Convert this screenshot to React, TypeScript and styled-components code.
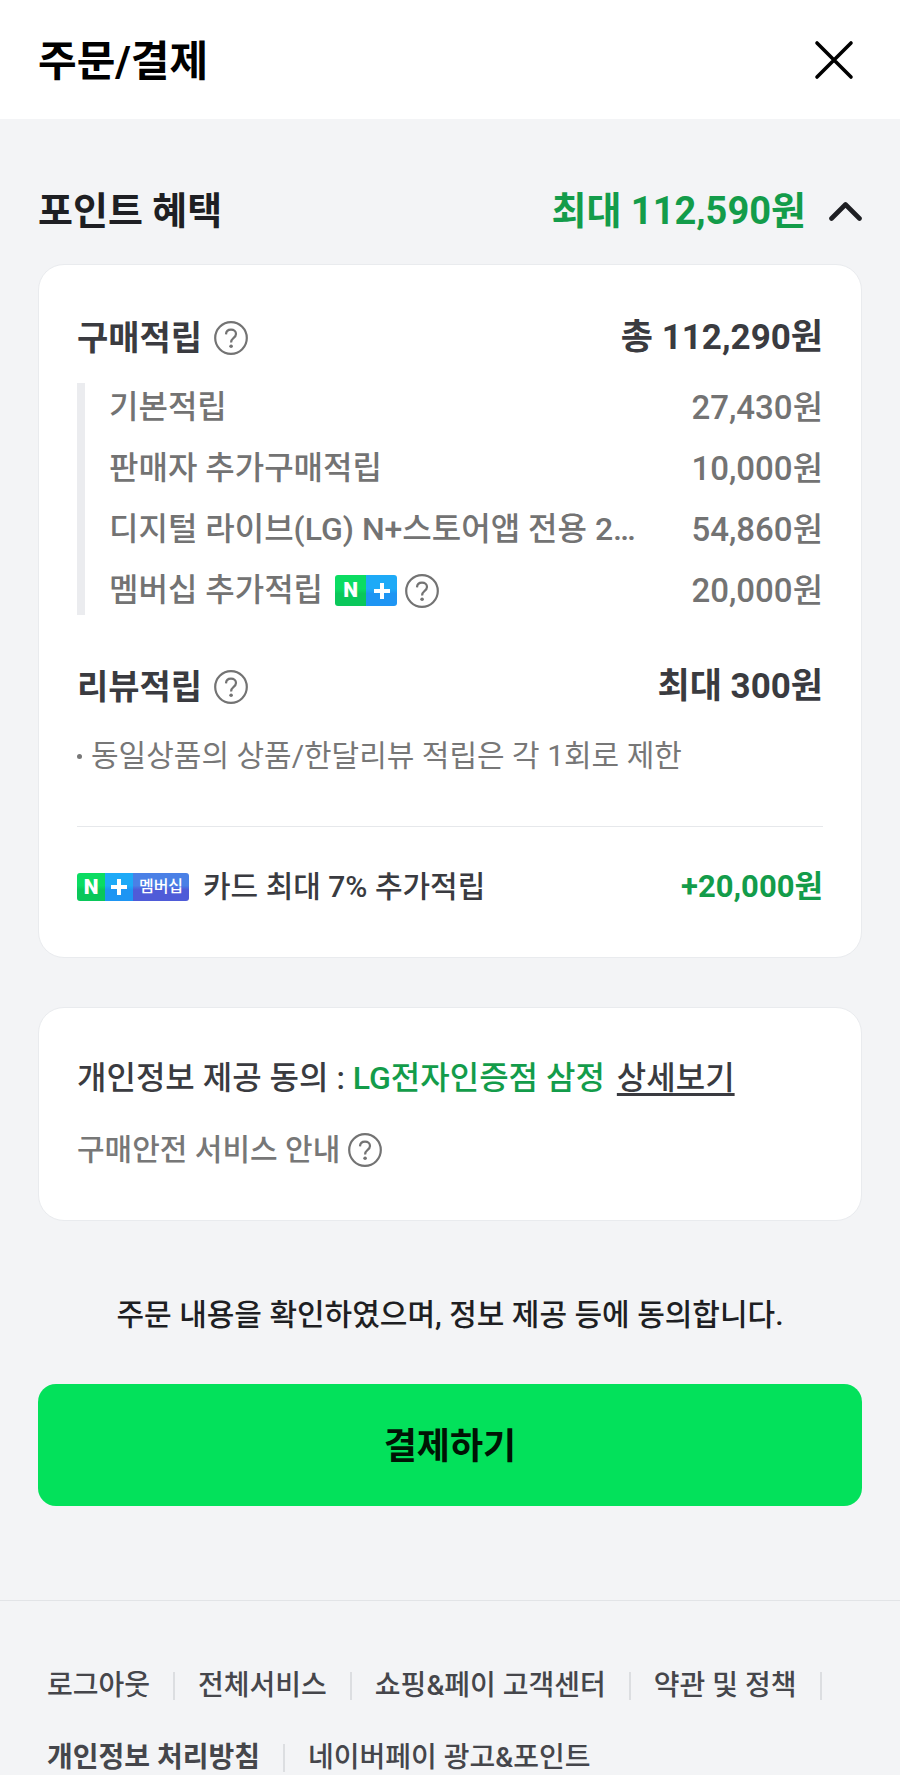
import React, { useState } from "react";
import styled, { createGlobalStyle } from "styled-components";

const GlobalStyle = createGlobalStyle`
  * { box-sizing: border-box; }
  body {
    margin: 0;
    background: #f3f4f6;
    color: #1e1f23;
    font-family: Roboto, "Noto Sans CJK KR", sans-serif;
    font-size: 30px;
    line-height: 44px;
  }
  h1, h2, h3, p, ul, dl, dd, dt { margin: 0; padding: 0; }
  button { font-family: inherit; cursor: pointer; }
`;

const TopBar = styled.header`
  display: flex;
  align-items: center;
  justify-content: space-between;
  padding: 29px 44px 28px 38px;
  background: #fff;
`;

const PageTitle = styled.h1`
  padding-top: 4px;
  font-size: 42px;
  line-height: 58px;
  font-weight: 700;
  color: #000;
`;

const IconButton = styled.button`
  display: flex;
  flex: none;
  padding: 0;
  border: 0;
  background: none;
  color: inherit;
`;

const Content = styled.main`
  padding: 67px 38px 94px;
`;

const SectionHeader = styled.div`
  display: flex;
  align-items: center;
  justify-content: space-between;
  margin-bottom: 28px;
  font-size: 38px;
  line-height: 50px;
`;

const SectionTitle = styled.h2`
  font-size: inherit;
  font-weight: 700;
`;

const SectionTotal = styled.div`
  display: flex;
  align-items: center;
  gap: 22px;
`;

const Green = styled.strong`
  font-weight: 700;
  color: #139c4a;
`;

const Card = styled.section`
  padding: 48px 38px;
  border: 1px solid #e9ebee;
  border-radius: 26px;
  background: #fff;

  & + & { margin-top: 49px; }
`;

const Row = styled.div`
  display: flex;
  align-items: center;
  justify-content: space-between;
  gap: 40px;
`;

const HeadRow = styled(Row)`
  font-size: 35px;
  line-height: 50px;
  font-weight: 700;
  color: #3a3b40;
`;

const HeadTitle = styled.h3`
  display: flex;
  align-items: center;
  gap: 12px;
  font-size: 34px;
`;

const Breakdown = styled.dl`
  display: grid;
  gap: 12px;
  margin: 20px 0 47px;
  padding-left: 24px;
  border-left: 8px solid #ebecef;
  font-size: 32px;
  line-height: 49px;
  font-weight: 500;
  color: #737373;
`;

const Label = styled.dt`
  display: flex;
  align-items: center;
  gap: 12px;
  min-width: 0;
  white-space: nowrap;
`;

const LabelText = styled.span`
  overflow: hidden;
  text-overflow: ellipsis;
`;

const LabelExtras = styled.span`
  display: flex;
  align-items: center;
  gap: 8px;
`;

const Amount = styled.dd`
  font-size: 33px;
  white-space: nowrap;
`;

const NoteList = styled.ul`
  list-style: none;
  margin-top: 22px;
  padding-bottom: 48px;
  border-bottom: 1px solid #e6e8eb;
  color: #777;
`;

const Note = styled.li`
  display: flex;
  align-items: center;
  gap: 9px;

  &::before {
    content: "";
    width: 5px;
    height: 5px;
    border-radius: 50%;
    background: #777;
  }
`;

const CardBenefit = styled(Row)`
  margin-top: 38px;
  font-weight: 500;
  color: #3a3b40;
`;

const BenefitName = styled.div`
  display: flex;
  align-items: center;
  gap: 14px;
`;

const BenefitAmount = styled(Green)`
  font-size: 31px;
`;

const Badge = styled.span<{ $height: number }>`
  display: flex;
  flex: none;
  height: ${(p) => p.$height}px;
  line-height: ${(p) => p.$height}px;
  border-radius: 3px;
  overflow: hidden;
  color: #fff;
`;

const BadgePart = styled.span<{ $from: string; $to: string; $width: number }>`
  display: flex;
  align-items: center;
  justify-content: center;
  width: ${(p) => p.$width}px;
  background: linear-gradient(${(p) => p.$from} 45%, ${(p) => p.$to} 60%);
  font-size: 16px;
  font-weight: 500;
`;

const BadgeLetter = styled.span`
  font-size: 21px;
  font-weight: 900;
`;

const Agreement = styled.p`
  margin-bottom: 28px;
  font-size: 32px;
  font-weight: 500;
  color: #3a3b40;
`;

const Seller = styled.span`
  color: #139c4a;
`;

const DetailLink = styled.a`
  margin-left: 4px;
  color: inherit;
  text-decoration: underline;
  text-decoration-thickness: 3px;
  text-decoration-skip-ink: none;
  text-underline-offset: 4px;
`;

const SafetyInfo = styled.div`
  display: flex;
  align-items: center;
  gap: 8px;
  font-weight: 500;
  color: #777;
`;

const Consent = styled.p`
  margin: 72px 0 47px;
  font-weight: 500;
  text-align: center;
`;

const PayButton = styled.button`
  display: block;
  width: 100%;
  padding: 38px 36px 34px;
  border: 0;
  border-radius: 18px;
  background: #03e15b;
  color: #001404;
  font-size: 36px;
  line-height: 50px;
  font-weight: 700;
`;

const Footer = styled.footer`
  padding: 68px 47px 0;
  border-top: 1px solid #e2e4e7;
`;

const FooterLinks = styled.ul`
  display: flex;
  flex-wrap: wrap;
  row-gap: 38px;
  list-style: none;
  font-size: 28px;
  line-height: 34px;
  font-weight: 500;
`;

const FooterItem = styled.li`
  display: flex;
  align-items: center;

  &:not(:last-child)::after {
    content: "";
    width: 2px;
    height: 28px;
    margin: 0 23px;
    background: #dcdee1;
  }
`;

const FooterLink = styled.a<{ $bold?: boolean }>`
  color: #45464b;
  font-weight: ${(p) => (p.$bold ? 700 : 500)};
  text-decoration: none;
`;

function CloseIcon() {
  return (
    <svg width="44" height="44" viewBox="0 0 44 44" fill="none" stroke="#000" strokeWidth="3.6" strokeLinecap="round" aria-hidden="true">
      <path d="M5 5l34 34M39 5L5 39" />
    </svg>
  );
}

function ChevronIcon({ open }: { open: boolean }) {
  return (
    <svg width="34" height="34" viewBox="0 0 34 34" fill="none" stroke="#1e1f23" strokeWidth="4.6" strokeLinecap="round" strokeLinejoin="round" aria-hidden="true">
      <path d={open ? "M3.5 24.5L17.5 10.5L31.5 24.5" : "M3.5 10.5L17.5 24.5L31.5 10.5"} />
    </svg>
  );
}

function HelpButton({ label }: { label: string }) {
  return (
    <IconButton type="button" aria-label={label}>
      <svg width="34" height="34" viewBox="0 0 34 34" fill="none" stroke="#737373" strokeWidth="2.2" aria-hidden="true">
        <circle cx="17" cy="17" r="15.8" />
        <path d="M12 13.4C12.1 10.5 14.1 8.7 17 8.7C19.9 8.7 22 10.4 22 13C22 15 20.9 16 19.4 17.1C17.7 18.4 17.1 19.1 17.1 21.6" />
        <circle cx="17.1" cy="25.2" r="1.8" fill="#737373" stroke="none" />
      </svg>
    </IconButton>
  );
}

function MembershipBadge({ size, full }: { size: number; full?: boolean }) {
  return (
    <Badge $height={size}>
      <BadgePart $from="#0bdc62" $to="#0ac75a" $width={size}>
        <BadgeLetter>N</BadgeLetter>
      </BadgePart>
      <BadgePart $from="#1eaaf7" $to="#1e95f3" $width={size}>
        <svg width="16" height="16" viewBox="0 0 16 16" stroke="#fff" strokeWidth="4" aria-label="플러스">
          <path d="M8 0v16M0 8h16" />
        </svg>
      </BadgePart>
      {full && (
        <BadgePart $from="#4a80e6" $to="#4f5bd8" $width={56}>
          멤버십
        </BadgePart>
      )}
    </Badge>
  );
}

const earnings = [
  { label: "기본적립", amount: "27,430원" },
  { label: "판매자 추가구매적립", amount: "10,000원" },
  { label: "디지털 라이브(LG) N+스토어앱 전용 2…", amount: "54,860원" },
  { label: "멤버십 추가적립", amount: "20,000원", membership: true },
];

const footerLinks = [
  { text: "로그아웃" },
  { text: "전체서비스" },
  { text: "쇼핑&페이 고객센터" },
  { text: "약관 및 정책" },
  { text: "개인정보 처리방침", bold: true },
  { text: "네이버페이 광고&포인트" },
];

export default function App() {
  const [open, setOpen] = useState(true);

  return (
    <>
      <GlobalStyle />
      <TopBar>
        <PageTitle>주문/결제</PageTitle>
        <IconButton type="button" aria-label="닫기">
          <CloseIcon />
        </IconButton>
      </TopBar>

      <Content>
        <SectionHeader>
          <SectionTitle>포인트 혜택</SectionTitle>
          <SectionTotal>
            <Green>최대 112,590원</Green>
            <IconButton type="button" aria-label="포인트 혜택" aria-expanded={open} onClick={() => setOpen(!open)}>
              <ChevronIcon open={open} />
            </IconButton>
          </SectionTotal>
        </SectionHeader>

        {open && (
          <Card>
            <HeadRow>
              <HeadTitle>
                구매적립
                <HelpButton label="구매적립 도움말" />
              </HeadTitle>
              <span>총 112,290원</span>
            </HeadRow>
            <Breakdown>
              {earnings.map((item) => (
                <Row key={item.label}>
                  <Label>
                    <LabelText>{item.label}</LabelText>
                    {item.membership && (
                      <LabelExtras>
                        <MembershipBadge size={31} />
                        <HelpButton label="멤버십 도움말" />
                      </LabelExtras>
                    )}
                  </Label>
                  <Amount>{item.amount}</Amount>
                </Row>
              ))}
            </Breakdown>

            <HeadRow>
              <HeadTitle>
                리뷰적립
                <HelpButton label="리뷰적립 도움말" />
              </HeadTitle>
              <span>최대 300원</span>
            </HeadRow>
            <NoteList>
              <Note>동일상품의 상품/한달리뷰 적립은 각 1회로 제한</Note>
            </NoteList>

            <CardBenefit>
              <BenefitName>
                <MembershipBadge size={28} full />
                카드 최대 7% 추가적립
              </BenefitName>
              <BenefitAmount>+20,000원</BenefitAmount>
            </CardBenefit>
          </Card>
        )}

        <Card>
          <Agreement>
            개인정보 제공 동의 : <Seller>LG전자인증점 삼정</Seller> <DetailLink href="#detail">상세보기</DetailLink>
          </Agreement>
          <SafetyInfo>
            구매안전 서비스 안내
            <HelpButton label="구매안전 서비스 도움말" />
          </SafetyInfo>
        </Card>

        <Consent>주문 내용을 확인하였으며, 정보 제공 등에 동의합니다.</Consent>
        <PayButton type="button">결제하기</PayButton>
      </Content>

      <Footer>
        <FooterLinks>
          {footerLinks.map((link) => (
            <FooterItem key={link.text}>
              <FooterLink href="#footer" $bold={link.bold}>
                {link.text}
              </FooterLink>
            </FooterItem>
          ))}
        </FooterLinks>
      </Footer>
    </>
  );
}
